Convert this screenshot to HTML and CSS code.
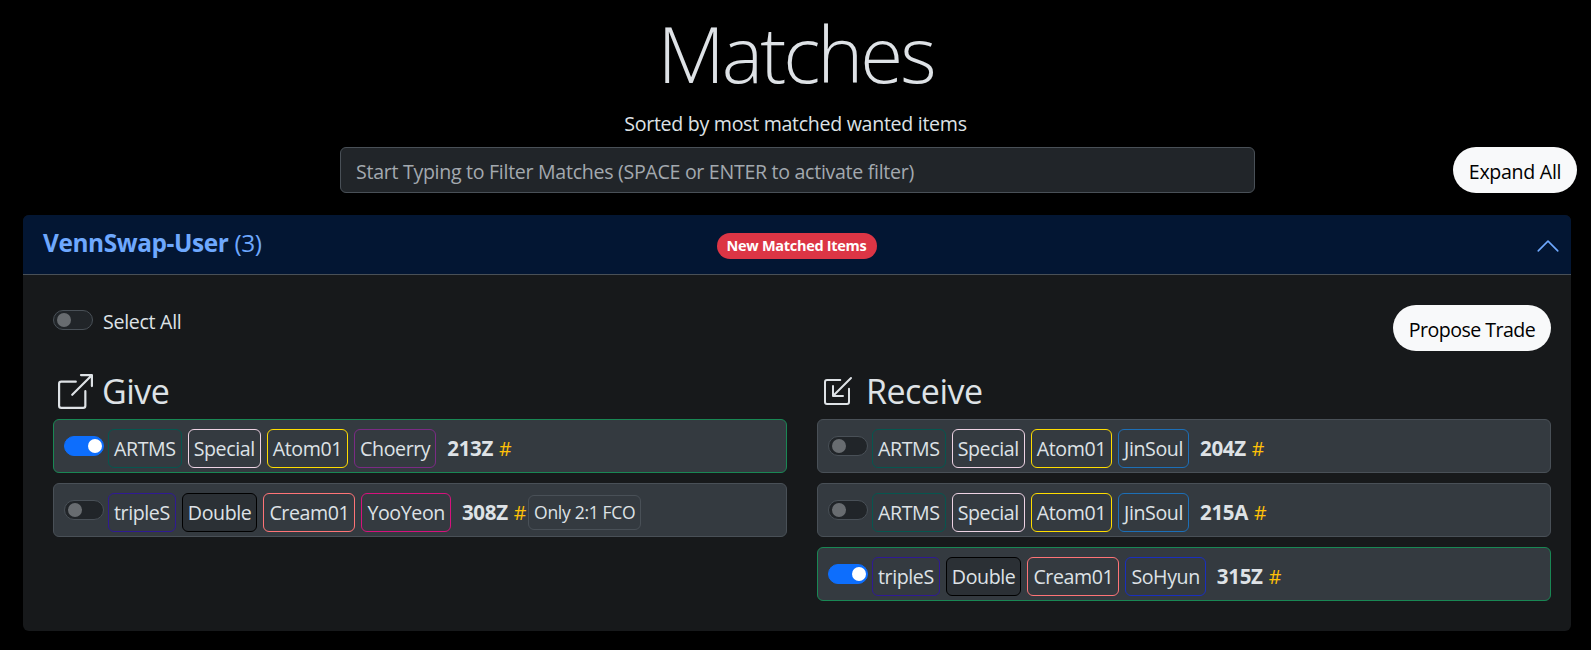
FILE: index.html
```html
<!DOCTYPE html>
<html lang="en">
<head>
<meta charset="utf-8">
<title>Matches</title>
<link rel="stylesheet" href="styles.css">
</head>
<body>
<header class="page-head">
  <h1 class="title">Matches</h1>
  <p class="subtitle">Sorted by most matched wanted items</p>
  <div class="filter-row">
    <input class="filter" type="text" placeholder="Start Typing to Filter Matches (SPACE or ENTER to activate filter)">
    <button class="pill expand">Expand All</button>
  </div>
</header>
<section class="accordion">
  <div class="acc-head">
    <div class="acc-user"><strong>VennSwap-User</strong> (3)</div>
    <span class="badge">New Matched Items</span>
    <svg class="chevron" viewBox="0 0 16 16" fill="currentColor"><path fill-rule="evenodd" d="M1.646 11.354a.5.5 0 0 0 .708 0L8 5.707l5.646 5.647a.5.5 0 0 0 .708-.708l-6-6a.5.5 0 0 0-.708 0l-6 6a.5.5 0 0 0 0 .708"/></svg>
  </div>
  <div class="acc-body">
    <div class="toolbar">
      <label class="select-all"><span class="switch"></span><span class="select-text">Select All</span></label>
      <button class="pill propose">Propose Trade</button>
    </div>
    <div class="columns">
      <div class="column">
        <h3 class="col-title">
          <svg class="col-icon" viewBox="0 0 16 16" fill="currentColor"><path fill-rule="evenodd" d="M8.636 3.5a.5.5 0 0 0-.5-.5H1.5A1.5 1.5 0 0 0 0 4.5v10A1.5 1.5 0 0 0 1.5 16h10a1.5 1.5 0 0 0 1.5-1.5V7.864a.5.5 0 0 0-1 0V14.5a.5.5 0 0 1-.5.5h-10a.5.5 0 0 1-.5-.5v-10a.5.5 0 0 1 .5-.5h6.636a.5.5 0 0 0 .5-.5"/><path fill-rule="evenodd" d="M16 .5a.5.5 0 0 0-.5-.5h-5a.5.5 0 0 0 0 1h3.793L6.146 9.146a.5.5 0 1 0 .708.708L15 1.707V5.5a.5.5 0 0 0 1 0z"/></svg>
          Give
        </h3>
        <div class="item on">
          <span class="switch on"></span>
          <span class="chip artms">ARTMS</span><span class="chip special">Special</span><span class="chip atom">Atom01</span><span class="chip choerry">Choerry</span>
          <b class="serial">213Z</b><span class="hash">#</span>
        </div>
        <div class="item">
          <span class="switch"></span>
          <span class="chip triples">tripleS</span><span class="chip double">Double</span><span class="chip cream">Cream01</span><span class="chip yooyeon">YooYeon</span>
          <b class="serial">308Z</b><span class="hash">#</span><span class="note">Only 2:1 FCO</span>
        </div>
      </div>
      <div class="column">
        <h3 class="col-title">
          <svg class="col-icon small" viewBox="0 0 16 16" fill="currentColor"><path fill-rule="evenodd" d="M9.636 2.5a.5.5 0 0 0-.5-.5H2.5A1.5 1.5 0 0 0 1 3.5v10A1.5 1.5 0 0 0 2.5 15h10a1.5 1.5 0 0 0 1.5-1.5V6.864a.5.5 0 0 0-1 0V13.5a.5.5 0 0 1-.5.5h-10a.5.5 0 0 1-.5-.5v-10a.5.5 0 0 1 .5-.5h6.636a.5.5 0 0 0 .5-.5"/><path fill-rule="evenodd" d="M5 10.5a.5.5 0 0 0 .5.5h5a.5.5 0 0 0 0-1H6.707l8.147-8.146a.5.5 0 0 0-.708-.708L6 9.293V5.5a.5.5 0 0 0-1 0z"/></svg>
          Receive
        </h3>
        <div class="item">
          <span class="switch"></span>
          <span class="chip artms">ARTMS</span><span class="chip special">Special</span><span class="chip atom">Atom01</span><span class="chip jinsoul">JinSoul</span>
          <b class="serial">204Z</b><span class="hash">#</span>
        </div>
        <div class="item">
          <span class="switch"></span>
          <span class="chip artms">ARTMS</span><span class="chip special">Special</span><span class="chip atom">Atom01</span><span class="chip jinsoul">JinSoul</span>
          <b class="serial">215A</b><span class="hash">#</span>
        </div>
        <div class="item on">
          <span class="switch on"></span>
          <span class="chip triples">tripleS</span><span class="chip double">Double</span><span class="chip cream">Cream01</span><span class="chip sohyun">SoHyun</span>
          <b class="serial">315Z</b><span class="hash">#</span>
        </div>
      </div>
    </div>
  </div>
</section>
</body>
</html>
```
FILE: styles.css
```css
* { box-sizing: border-box; }
html, body { height: 100%; }
body {
  margin: 0;
  background: #000;
  color: #dee2e6;
  font-family: "Open Sans", "Noto Sans", sans-serif;
  font-size: 19.6px;
  letter-spacing: -0.3px;
  overflow: hidden;
}
.page-head { text-align: center; }
.title {
  margin: 0;
  padding-top: 1px;
  height: 111px;
  font-size: 78px;
  line-height: 104px;
  font-weight: 300;
  letter-spacing: -3px;
}
.subtitle { margin: 0; height: 36px; line-height: 26px; font-size: 19.6px; }
.filter-row {
  display: grid;
  grid-template-columns: 915px 1fr;
  padding: 0 14px 0 340px;
  align-items: start;
}
.filter {
  height: 46px;
  padding: 3px 15px 0;
  background: #212529;
  border: 1px solid #495057;
  border-radius: 6px;
  color: #dee2e6;
  font: inherit;
  letter-spacing: -0.3px;
}
.filter::placeholder { color: #a3a9af; opacity: 1; }
.pill {
  height: 46px;
  border: 0;
  border-radius: 23px;
  background: #f8f9fa;
  color: #000;
  font: inherit;
  letter-spacing: -0.3px;
  padding: 2px 0 0;
}
.expand { justify-self: end; width: 124px; }
.propose { width: 158px; letter-spacing: -0.55px; }
.accordion {
  margin: 22px 20px 0 23px;
  border-radius: 6px;
  overflow: hidden;
  background: #17191b;
}
.acc-head {
  display: grid;
  grid-template-columns: 1fr auto 1fr;
  align-items: center;
  height: 60px;
  padding: 0 21px 0 20px;
  background: #031633;
  border-bottom: 1px solid #495057;
  color: #6ea8fe;
}
.acc-user { font-size: 24.4px; letter-spacing: -0.4px; margin-top: -5px; }
.acc-user strong { font-weight: 700; }
.badge {
  display: block;
  height: 26px;
  width: 160px;
  margin-top: 3px;
  border-radius: 13px;
  background: #dc3545;
  color: #fff;
  font-size: 14.5px;
  font-weight: 700;
  line-height: 26px;
  text-align: center;
}
.chevron { width: 26px; height: 26px; justify-self: end; margin: 3px -11px 0 0; }
.acc-body { padding: 30px 20px 20px 30px; }
.toolbar { display: flex; justify-content: space-between; align-items: flex-start; }
.select-all { display: flex; align-items: center; gap: 10px; margin-top: 3px; height: 24px; }
.select-text { margin-top: 3px; }
.switch {
  flex: none;
  display: block;
  position: relative;
  width: 40px;
  height: 20px;
  border-radius: 10px;
  background: #212529;
  border: 1px solid #495057;
}
.switch::after {
  content: "";
  position: absolute;
  left: 3px;
  top: 2px;
  width: 14px;
  height: 14px;
  border-radius: 50%;
  background: #686c70;
}
.switch.on { background: #0d6efd; border-color: #0d6efd; }
.switch.on::after { left: 23px; background: #fff; }
.columns { display: grid; grid-template-columns: 1fr 1fr; gap: 30px; margin-top: 15px; }
.col-title {
  display: flex;
  align-items: center;
  gap: 9px;
  height: 50px;
  margin: 0 0 3px;
  font-size: 34px;
  font-weight: 400;
  letter-spacing: -0.5px;
}
.col-icon { width: 35px; height: 35px; margin-left: 5px; }
.col-icon.small { width: 32px; height: 32px; margin-right: 3px; }
.item {
  display: flex;
  align-items: center;
  height: 54px;
  margin-bottom: 10px;
  padding: 4px 0 0 10px;
  background: #343a40;
  border: 1px solid #495057;
  border-radius: 6px;
}
.item.on { border-color: #198754; }
.item .switch { margin-right: 4px; margin-top: -5px; }
.chip {
  display: block;
  height: 39px;
  line-height: 37px;
  padding: 0 5px;
  margin-right: 6px;
  border: 1px solid;
  border-radius: 6px;
  white-space: nowrap;
  letter-spacing: -0.4px;
}
.artms { border-color: #06564f; }
.special { border-color: #eed3e4; }
.atom { border-color: #ffdd00; }
.choerry { border-color: #7b2b85; }
.jinsoul { border-color: #1c6fb8; }
.triples { border-color: #2f1a94; }
.double { border-color: #000; background: #2b3035; }
.cream { border-color: #ff7477; }
.yooyeon { border-color: #d6127d; }
.sohyun { border-color: #1a2fbe; }
.serial { margin-left: 5px; font-weight: 700; font-size: 20.5px; }
.hash { margin-left: 6px; color: #ffc107; }
.note {
  display: block;
  margin-left: 2px;
  height: 35px;
  line-height: 33px;
  padding: 0 5px;
  border: 1px solid #495057;
  border-radius: 6px;
  font-size: 17.5px;
}
```
